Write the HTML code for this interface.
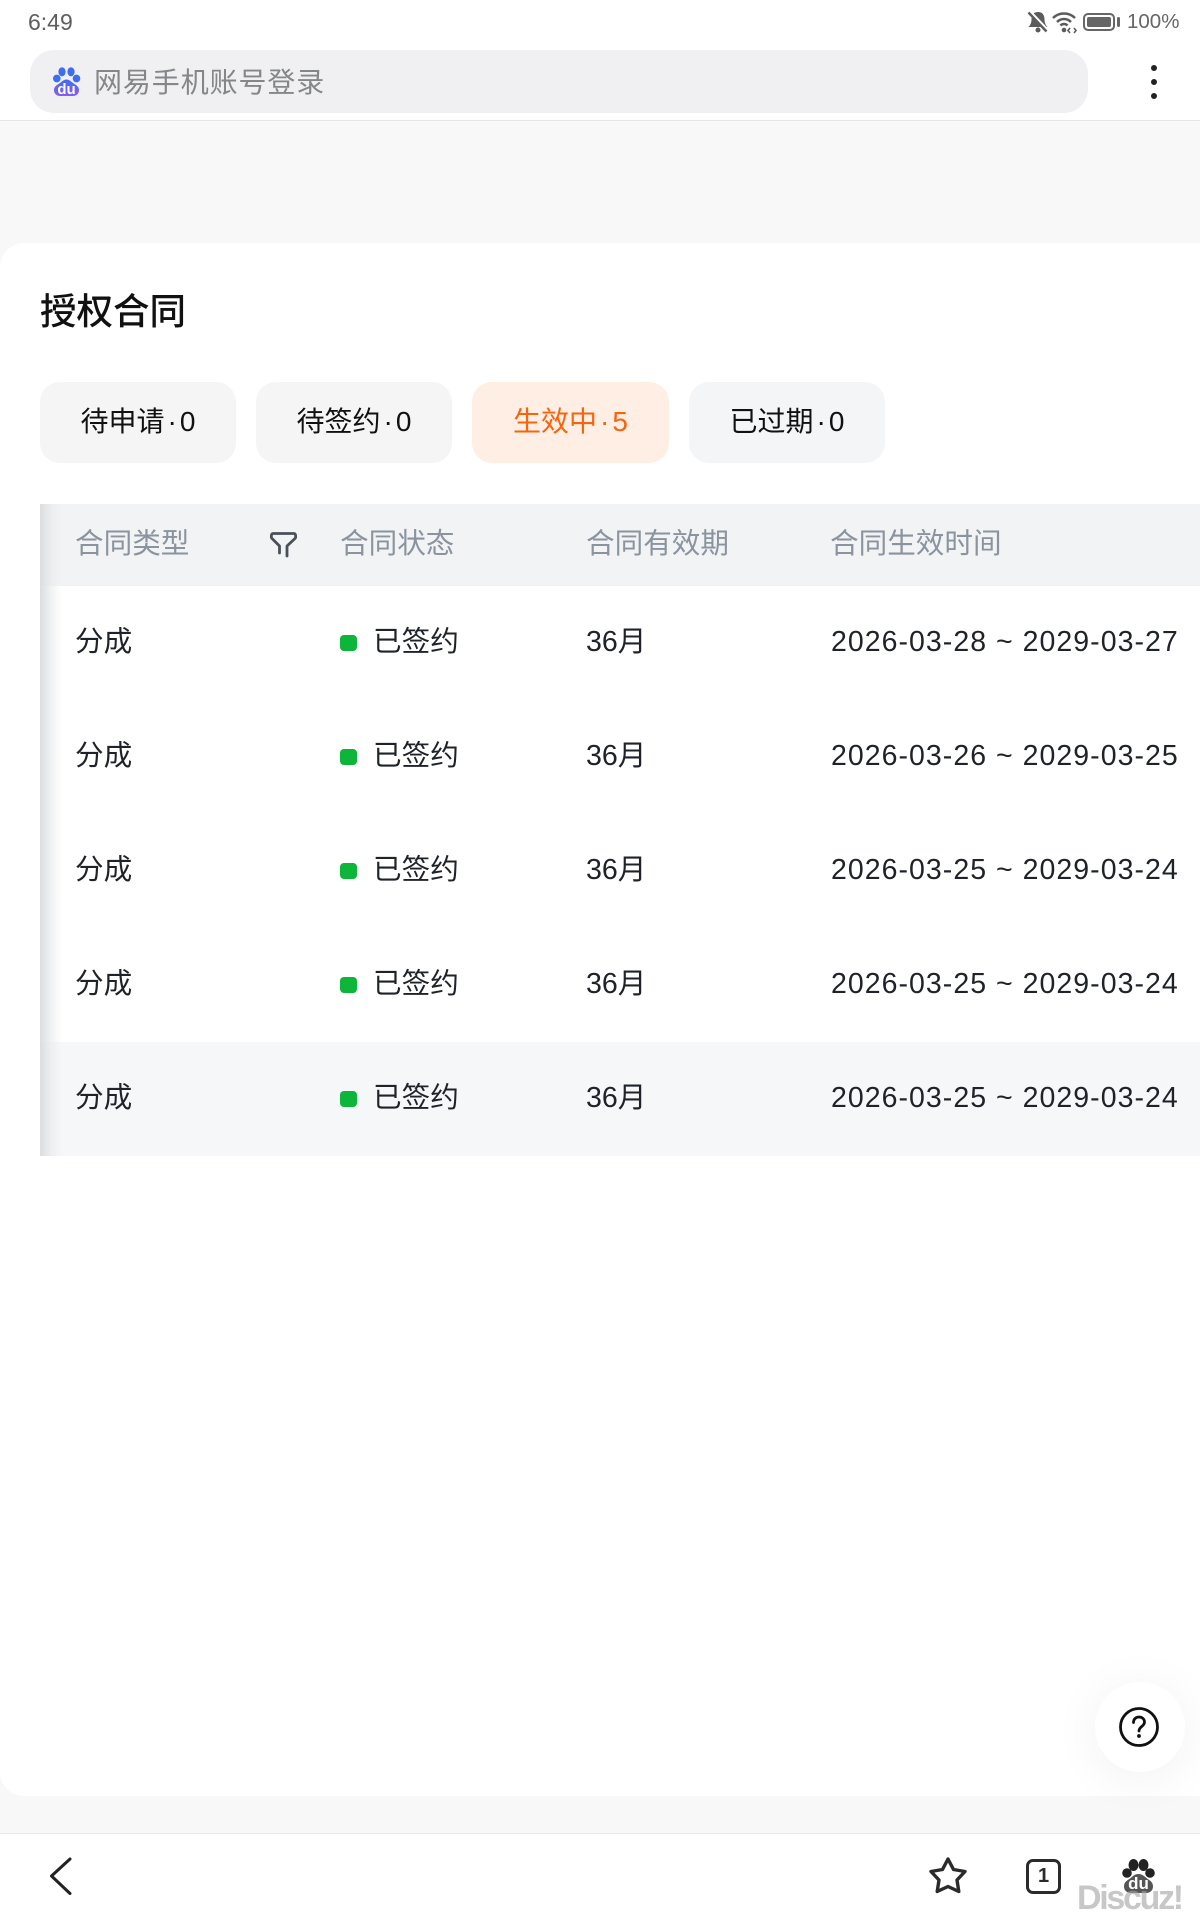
<!DOCTYPE html>
<html lang="zh">
<head>
<meta charset="utf-8">
<title>授权合同</title>
<style>
html,body{margin:0;padding:0;width:1200px;height:1920px;overflow:hidden;background:#f8f8f8}
body{position:relative;font-family:"Liberation Sans","Noto Sans CJK SC",sans-serif;color:#1f2329}
.a{position:absolute;white-space:nowrap}
svg{position:absolute;display:block;overflow:visible}
.top{left:0;top:0;width:1200px;height:120px;background:#fff;border-bottom:1px solid #e6e6e6}
.search{left:30px;top:50px;width:1058px;height:63px;border-radius:24px;background:#f0f0f2}
.card{left:0;top:243px;width:1200px;height:1553px;background:#fff;border-radius:24px 0 0 24px}
.tab{top:382px;width:196px;height:81px;line-height:80px;border-radius:20px;background:#f5f5f5;text-align:center;font-size:28px;color:#111}
.head{left:40px;top:504px;width:1160px;height:82px;background:#f1f3f5}
.hl{top:505px;height:82px;line-height:78px;font-size:28.6px;color:#8a939e}
.last{left:40px;top:1042px;width:1160px;height:114px;background:#f6f7f9}
.shadow{left:40px;top:504px;width:22px;height:652px;background:linear-gradient(90deg,#dcdddf,rgba(232,233,235,.6) 50%,rgba(255,255,255,0))}
.t{font-size:28.6px;line-height:40px;color:#1f2329}
.d{font-size:28.5px;line-height:40px;color:#1f2329;letter-spacing:1.03px}
.dot{left:340px;width:17px;height:16px;border-radius:4px;background:#0db53a}
.help{left:1095px;top:1682px;width:90px;height:90px;border-radius:50%;background:#fff;box-shadow:0 6px 50px rgba(0,0,0,.06)}
.bottom{left:0;top:1833px;width:1200px;height:87px;background:#fff;border-top:1px solid #e8e8e8;box-sizing:border-box}
.wm{left:1077px;top:1878px;font-size:34px;line-height:40px;font-weight:700;color:rgba(165,165,165,.62);letter-spacing:-2.3px}
</style>
</head>
<body>
<div class="a top"></div>
<div class="a" style="left:28px;top:9px;font-size:23px;line-height:26px;color:#5e5e5e">6:49</div>

<svg style="left:1026px;top:10px" width="24" height="24" viewBox="0 0 24 24"><path d="M12 2c-4.500 0-6.500 3-6.500 7.500 0 3.500-1.500 6-3 7.500h19c-1.500-1.500-3-4-3-7.500C18.500 5 16.500 2 12 2z" fill="#5c5c5c"/><circle cx="12" cy="20" r="2.500" fill="#5c5c5c"/><path d="M3 1l19 20" stroke="#fff" stroke-width="3.500"/><path d="M2.500 2.500l18 19" stroke="#5c5c5c" stroke-width="2.400"/></svg>
<svg style="left:1052px;top:11px" width="26" height="22" viewBox="0 0 26 22" fill="none" stroke="#5c5c5c" stroke-width="2.600"><path d="M1 7c6-6 16-6 22 0"/><path d="M5 11c4-4 10-4 14 0"/><path d="M8.500 14.500c2-2 5-2 7 0"/><circle cx="12" cy="19" r="2.300" fill="#5c5c5c" stroke="none"/><path d="M18 17l-2 2.500 2 2.500M22 17l2 2.500-2 2.500" stroke-width="1.600"/></svg>
<div class="a" style="left:1083px;top:13px;width:28px;height:14px;border:2px solid #666;border-radius:5px"></div>
<div class="a" style="left:1087px;top:17px;width:24px;height:10px;background:#666;border-radius:2px"></div>
<div class="a" style="left:1117px;top:17px;width:3px;height:10px;background:#666;border-radius:2px"></div>
<div class="a" style="left:1127px;top:9px;font-size:20.5px;line-height:26px;color:#666">100%</div>

<div class="a search"></div>
<svg style="left:52px;top:66px" width="29" height="31" viewBox="0 0 29 31">
<defs><linearGradient id="g" x1="0" y1="0" x2="0" y2="1"><stop offset="0" stop-color="#3f6df0"/><stop offset="1" stop-color="#8a5cf0"/></linearGradient></defs>
<ellipse cx="10" cy="5.800" rx="3.600" ry="4.600" fill="#3f6df0"/><ellipse cx="19" cy="5.800" rx="3.600" ry="4.600" fill="#3f6df0"/>
<ellipse cx="4.800" cy="12.500" rx="3.800" ry="3.900" fill="#3f6df0"/><ellipse cx="24.500" cy="12.500" rx="3.800" ry="3.900" fill="#3f6df0"/>
<path d="M14.500 13.500c3 0 4.500 2 6.500 3.500 3 2 6 3.500 6 7 0 4-3 6-6 6H8c-3 0-6-2-6-6 0-3.500 3-5 6-7 2-1.500 3.500-3.500 6.500-3.500z" fill="url(#g)"/>
<text x="14.500" y="28" font-size="15" font-weight="700" text-anchor="middle" fill="#fff" font-family="Liberation Sans,sans-serif">du</text></svg>
<div class="a" style="left:94px;top:63px;font-size:28px;line-height:40px;color:#85868a;letter-spacing:.9px">网易手机账号登录</div>

<div class="a" style="left:1151px;top:65px;width:6px;height:6px;border-radius:50%;background:#222"></div>
<div class="a" style="left:1151px;top:79px;width:6px;height:6px;border-radius:50%;background:#222"></div>
<div class="a" style="left:1151px;top:93px;width:6px;height:6px;border-radius:50%;background:#222"></div>

<div class="a card"></div>
<div class="a" style="left:40px;top:289px;font-size:36.5px;line-height:46px;font-weight:500;color:#111">授权合同</div>

<div class="a tab" style="left:40px">待申请<span style="margin:0 3px">·</span>0</div>
<div class="a tab" style="left:256px">待签约<span style="margin:0 3px">·</span>0</div>
<div class="a tab" style="left:472px;width:197px;background:#ffeee3;color:#f7640f">生效中<span style="margin:0 3px">·</span>5</div>
<div class="a tab" style="left:689px;background:#f4f5f6">已过期<span style="margin:0 3px">·</span>0</div>

<div class="a head"></div>
<div class="a last"></div>
<div class="a shadow"></div>
<div class="a hl" style="left:75px">合同类型</div>
<div class="a hl" style="left:340px">合同状态</div>
<div class="a hl" style="left:586px">合同有效期</div>
<div class="a hl" style="left:830px">合同生效时间</div>
<svg style="left:268px;top:529px" width="31" height="30" viewBox="0 0 31 30" fill="none" stroke="#4a5058" stroke-width="2.800" stroke-linecap="round" stroke-linejoin="round"><path d="M11.500 24V17L4 9.500C3 8.500 3 4.500 5 4.500H26C28 4.500 28 8.500 27 9.500L19 17V27"/></svg>

<div class="a t" style="left:75px;top:622px">分成</div><div class="a dot" style="top:635px"></div><div class="a t" style="left:373px;top:622px">已签约</div><div class="a t" style="left:586px;top:622px">36月</div><div class="a d" style="left:831px;top:622px">2026-03-28 ~ 2029-03-27</div>
<div class="a t" style="left:75px;top:736px">分成</div><div class="a dot" style="top:749px"></div><div class="a t" style="left:373px;top:736px">已签约</div><div class="a t" style="left:586px;top:736px">36月</div><div class="a d" style="left:831px;top:736px">2026-03-26 ~ 2029-03-25</div>
<div class="a t" style="left:75px;top:850px">分成</div><div class="a dot" style="top:863px"></div><div class="a t" style="left:373px;top:850px">已签约</div><div class="a t" style="left:586px;top:850px">36月</div><div class="a d" style="left:831px;top:850px">2026-03-25 ~ 2029-03-24</div>
<div class="a t" style="left:75px;top:964px">分成</div><div class="a dot" style="top:977px"></div><div class="a t" style="left:373px;top:964px">已签约</div><div class="a t" style="left:586px;top:964px">36月</div><div class="a d" style="left:831px;top:964px">2026-03-25 ~ 2029-03-24</div>
<div class="a t" style="left:75px;top:1078px">分成</div><div class="a dot" style="top:1091px"></div><div class="a t" style="left:373px;top:1078px">已签约</div><div class="a t" style="left:586px;top:1078px">36月</div><div class="a d" style="left:831px;top:1078px">2026-03-25 ~ 2029-03-24</div>

<div class="a help"></div>
<svg style="left:1119px;top:1707px" width="40" height="40" viewBox="0 0 40 40" fill="none" stroke="#111" stroke-width="2.800" stroke-linecap="round"><circle cx="20" cy="20" r="18.500"/><path d="M14.500 15.500c0-3.500 2.500-5.500 5.500-5.500s5.500 2 5.500 5c0 4.500-5.500 4.500-5.500 9"/><circle cx="20" cy="29" r="1.300" fill="#111" stroke-width="1.200"/></svg>

<div class="a bottom"></div>
<svg style="left:46px;top:1854px" width="30" height="44" viewBox="0 0 30 44" fill="none" stroke="#222" stroke-width="3" stroke-linecap="round" stroke-linejoin="round"><path d="M24 5L5.500 22 24 39.500"/></svg>
<svg style="left:928px;top:1856px" width="40" height="38" viewBox="0 0 40 38" fill="none" stroke="#2b2b2b" stroke-width="3.400" stroke-linejoin="round"><path d="M20 3l5.500 10.500 11.500 2-8 8.500 1.800 11.500L20 30.500 9.200 35.500 11 24l-8-8.500 11.500-2z"/></svg>
<div class="a" style="left:1026px;top:1859px;width:35px;height:35px;border:3px solid #2b2b2b;border-radius:7px;box-sizing:border-box"></div>
<div class="a" style="left:1026px;top:1859px;width:35px;height:35px;line-height:34px;text-align:center;font-size:20px;font-weight:700;color:#2b2b2b">1</div>
<svg style="left:1121px;top:1858px" width="36" height="36" viewBox="0 0 36 36">
<ellipse cx="12.500" cy="7" rx="5" ry="6" fill="#222"/><ellipse cx="22.500" cy="7" rx="5" ry="6" fill="#222"/>
<ellipse cx="6" cy="15" rx="4.800" ry="4.800" fill="#222"/><ellipse cx="29" cy="15" rx="4.800" ry="4.800" fill="#222"/>
<path d="M17.500 16c4 0 6 2.500 8.500 4.500 3 2 6 3.500 6 8 0 4-3 6.500-7 6.500H10c-4 0-7-2.500-7-6.500 0-4.500 3-6 6-8 2.500-2 4.500-4.500 8.500-4.500z" fill="#555"/>
<text x="17.500" y="31" font-size="17" font-weight="700" text-anchor="middle" fill="#fff" font-family="Liberation Sans,sans-serif">du</text></svg>
<div class="a wm">Discuz!</div>
</body>
</html>
